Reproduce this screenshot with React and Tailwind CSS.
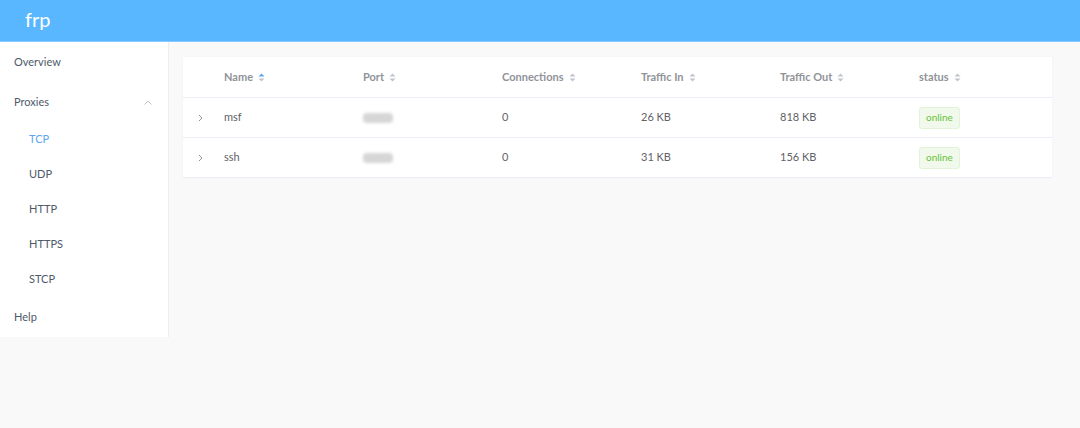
import React from 'react';

const rows = [
  { name: 'msf', conns: 0, inT: '26 KB', outT: '818 KB' },
  { name: 'ssh', conns: 0, inT: '31 KB', outT: '156 KB' },
];

const SortIcon = ({ active }) => (
  <svg width="7" height="9" viewBox="0 0 7 9" className="ml-[5px] inline-block">
    <path d="M3.5 0.5L6.5 3.5H0.5Z" fill={active ? '#5aa6f0' : '#c0c4cc'} />
    <path d="M3.5 8.5L6.5 5.5H0.5Z" fill="#c0c4cc" />
  </svg>
);

const cols = ['Name', 'Port', 'Connections', 'Traffic In', 'Traffic Out', 'status'];

export default function App() {
  return (
    <div className="w-[1080px] h-[428px] bg-[#f9f9f9] text-[11px]" style={{ fontFamily: 'Lato, "Open Sans", sans-serif' }}>
      {/* Header */}
      <div className="h-[42px] bg-[#58b7ff] border-b border-[#86cbff] flex items-center px-[25px]">
        <span className="text-white text-[20px] leading-none -mt-[4px]">frp</span>
      </div>

      <div className="flex">
        {/* Sidebar */}
        <div className="w-[169px] shrink-0 h-[295px] bg-white border-r border-[#eeeeee] text-[#4e5a68]">
          <div className="h-[40px] flex items-center pl-[14px]">Overview</div>
          <div className="h-[40px] flex items-center justify-between pl-[14px] pr-[16px]">
            <span>Proxies</span>
            <svg width="8" height="5" viewBox="0 0 8 5">
              <path d="M0.5 4.5L4 1L7.5 4.5" stroke="#c0c4cc" fill="none" strokeWidth="1" />
            </svg>
          </div>
          {['TCP', 'UDP', 'HTTP', 'HTTPS', 'STCP'].map((s, i) => (
            <div key={s} className={`h-[35px] flex items-center pl-[29px] ${i === 0 ? 'text-[#5aa6f0]' : ''}`}>{s}</div>
          ))}
          <div className="h-[40px] flex items-center pl-[14px]">Help</div>
        </div>

        {/* Main */}
        <div className="flex-1 min-w-0 pt-[15px] pl-[14px] pr-[28px]">
          <div className="bg-white shadow-[0_0_3px_rgba(0,0,0,0.04)]">
            <div className="h-[41px] flex items-center border-b border-[#ebeef5] font-bold text-[#909399]">
              <div className="w-[41px] shrink-0" />
              {cols.map((c, i) => (
                <div key={c} className={`${i === 5 ? 'flex-1' : 'w-[139px] shrink-0'} flex items-center`}>
                  {c}
                  <SortIcon active={i === 0} />
                </div>
              ))}
            </div>
            {rows.map((r) => (
              <div key={r.name} className="h-[40px] flex items-center border-b border-[#ebeef5] text-[#606266]">
                <div className="w-[41px] shrink-0 flex pl-[15px]">
                  <svg width="5" height="8" viewBox="0 0 5 8">
                    <path d="M1 1L4 4L1 7" stroke="#909399" fill="none" strokeWidth="1" />
                  </svg>
                </div>
                <div className="w-[139px] shrink-0">{r.name}</div>
                <div className="w-[139px] shrink-0">
                  <div className="w-[30px] h-[10px] rounded-[4px] bg-[#d6d6d6] blur-[1.5px]" />
                </div>
                <div className="w-[139px] shrink-0">{r.conns}</div>
                <div className="w-[139px] shrink-0">{r.inT}</div>
                <div className="w-[139px] shrink-0">{r.outT}</div>
                <div className="flex-1">
                  <span className="inline-flex items-center h-[22px] px-[6px] rounded-[3px] bg-[#f0f9eb] border border-[#e1f3d8] text-[#67c23a] text-[10px]">online</span>
                </div>
              </div>
            ))}
          </div>
        </div>
      </div>
    </div>
  );
}
